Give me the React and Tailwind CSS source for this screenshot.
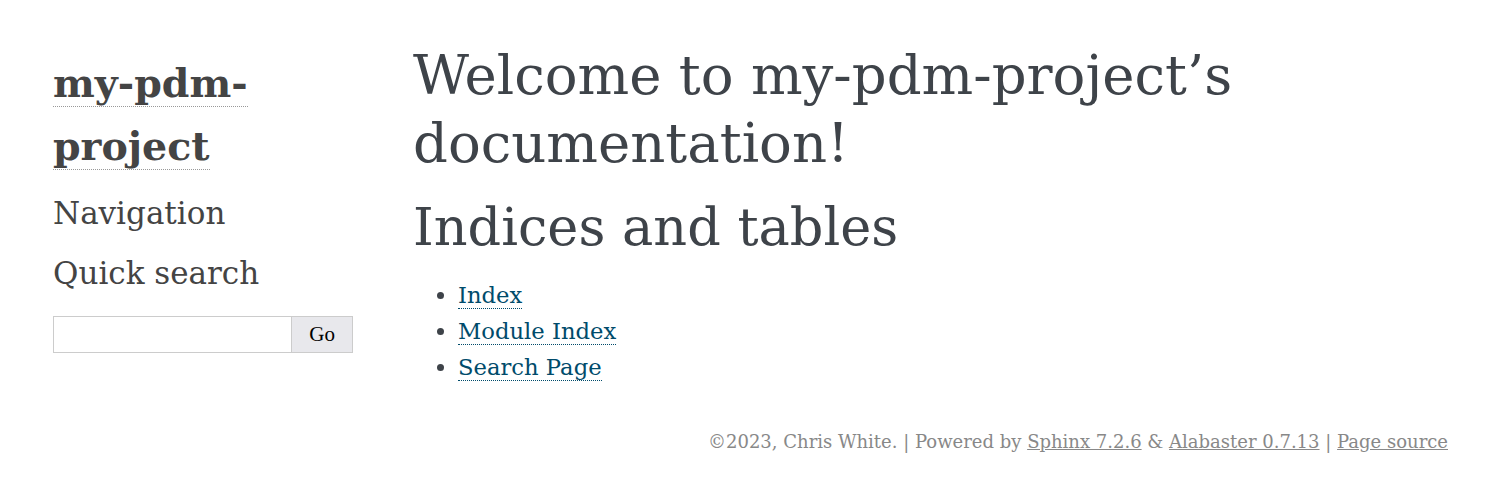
const serif = "font-['DejaVu_Serif','Liberation_Serif',serif]";

const indexLinks = ["Index", "Module Index", "Search Page"];

export default function App() {
  return (
    <div className={`min-h-[501px] bg-white text-[#3e4349] ${serif}`}>
      <div className="flex pl-[53px] pr-[51px] pt-[41px]">
        {/* Sidebar */}
        <aside className="w-[300px] shrink-0 mr-[60px]">
          <h1 className="text-[39.5px] leading-[63px] font-bold text-[#444] mt-[11px]">
            <a href="#" className="border-b border-dotted border-[#999]">
              my-pdm-project
            </a>
          </h1>
          <h3 className="text-[31px] leading-[60px] text-[#444] mt-[5px]">Navigation</h3>
          <h3 className="text-[31px] leading-[60px] text-[#444]">Quick search</h3>
          <form className="flex mt-[13px] h-[37px]">
            <input
              type="text"
              className="w-[240px] border border-[#ccc] bg-white outline-none"
            />
            <button
              type="button"
              className="w-[61px] border border-l-0 border-[#ccc] bg-[#e8e8ec] text-[21px] text-black font-['Liberation_Serif',serif]"
            >
              Go
            </button>
          </form>
        </aside>

        {/* Body */}
        <main className="flex-1">
          <h1 className="text-[54.5px] leading-[68px]">
            Welcome to my-pdm-project’s documentation!
          </h1>
          <h2 className="text-[52.5px] leading-[62px] mt-[19px]">Indices and tables</h2>
          <ul className="list-disc pl-[45px] mt-[19px] text-[22.7px] leading-[36px]">
            {indexLinks.map((label) => (
              <li key={label}>
                <a href="#" className="text-[#004b6b] border-b border-dotted border-[#004b6b]">
                  {label}
                </a>
              </li>
            ))}
          </ul>
        </main>
      </div>

      {/* Footer */}
      <footer className="pr-[51px] mt-[43px] text-right text-[18px] text-[#888]">
        ©2023, Chris White. | Powered by{" "}
        <a href="#" className="underline">Sphinx 7.2.6</a> &amp;{" "}
        <a href="#" className="underline">Alabaster 0.7.13</a> |{" "}
        <a href="#" className="underline">Page source</a>
      </footer>
    </div>
  );
}
